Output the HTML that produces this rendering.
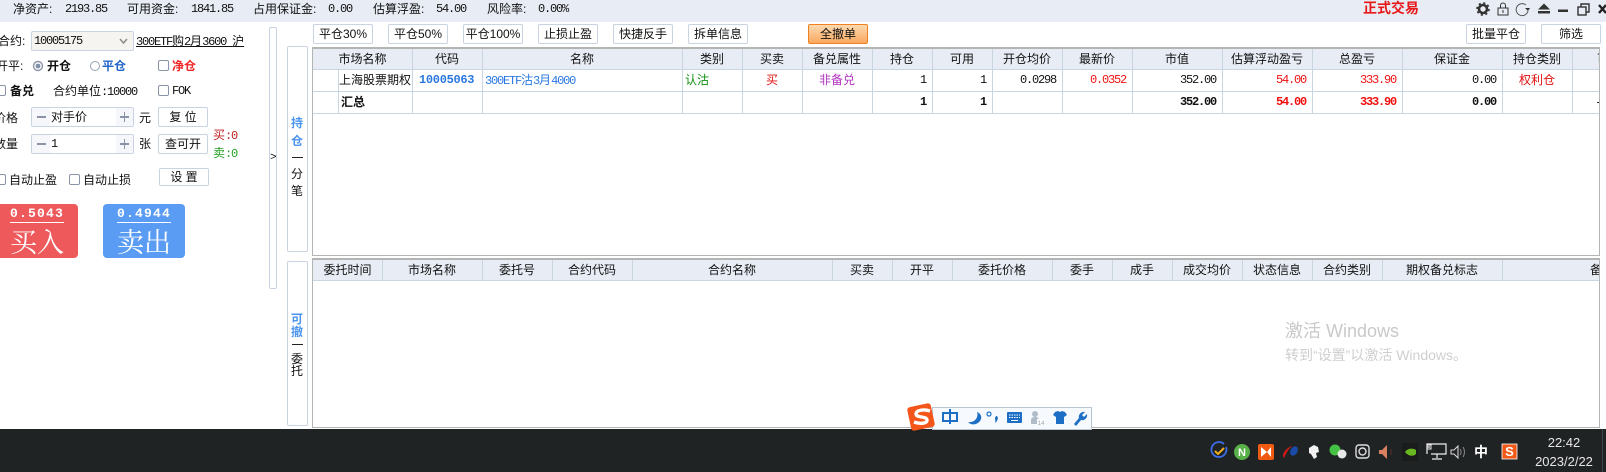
<!DOCTYPE html>
<html lang="zh-CN"><head><meta charset="utf-8"><title>正式交易</title>
<style>
*{box-sizing:border-box;margin:0;padding:0}
html,body{width:1606px;height:472px;overflow:hidden;background:#fff}
body{position:relative;font:12px/14px "Liberation Sans","WenQuanYi Zen Hei","Noto Sans CJK SC",sans-serif;color:#111}
.a{position:absolute;white-space:nowrap}
.m{font-family:"Liberation Mono","WenQuanYi Zen Hei",monospace;font-size:12px;letter-spacing:-1.2px}
.bx{position:absolute;background:#fff;border:1px solid #c9d3e1;border-radius:2px}
.btn{position:absolute;height:20px;background:#fff;border:1px solid #c9d3e1;border-radius:2px;text-align:center;line-height:18px;white-space:nowrap}
.cb{position:absolute;width:11px;height:11px;border:1px solid #8a94a6;border-radius:2px;background:#fff}
.h{position:absolute;text-align:center;white-space:nowrap;line-height:14px}
.v{position:absolute;background:#c9d6e2;width:1px}
.r{position:absolute;background:#c9d6e2;height:1px}
.cell{position:absolute;height:14px;line-height:14px;white-space:nowrap}
.num{text-align:right;font-family:"Liberation Mono",monospace;font-size:12px;letter-spacing:-1.2px}
.b{font-weight:bold}
svg{position:absolute;overflow:visible}
</style></head><body>

<!-- top bar -->
<div class="a" style="left:0;top:0;width:1606px;height:22px;background:#e8edf5"></div>
<div class="a" style="left:13px;top:2px">净资产:</div><div class="a m" style="left:65px;top:2px">2193.85</div>
<div class="a" style="left:127px;top:2px">可用资金:</div><div class="a m" style="left:191px;top:2px">1841.85</div>
<div class="a" style="left:253px;top:2px">占用保证金:</div><div class="a m" style="left:328px;top:2px">0.00</div>
<div class="a" style="left:373px;top:2px">估算浮盈:</div><div class="a m" style="left:436px;top:2px">54.00</div>
<div class="a" style="left:487px;top:2px">风险率:</div><div class="a m" style="left:538px;top:2px">0.00%</div>
<div class="a b" style="left:1363px;top:0;font-size:14px;line-height:16px;color:#e81818">正式交易</div>

<!-- window icons -->
<svg style="left:0;top:0" width="1606" height="22" viewBox="0 0 1606 22">
<circle cx="1483" cy="9" r="4" fill="none" stroke="#333" stroke-width="2.6"/>
<circle cx="1483" cy="9" r="6" fill="none" stroke="#333" stroke-width="1.6" stroke-dasharray="2.2 2.5"/>
<rect x="1498" y="8" width="10" height="7" fill="none" stroke="#333"/><path d="M1500.5 8V5.5a2.5 2.5 0 0 1 5 0V8" fill="none" stroke="#333"/><path d="M1503 10v3" stroke="#333"/>
<path d="M1526 5a6 6 0 1 0 2 6" fill="none" stroke="#555"/><path d="M1525 8h5l-2 3z" fill="#333"/>
<path d="M1544 3.5l6 6h-12z" fill="#333"/><rect x="1538" y="11" width="12" height="2.5" fill="#333"/>
<rect x="1558" y="9.5" width="10" height="2.5" fill="#333"/>
<rect x="1578" y="7" width="8" height="8" fill="#e8edf5" stroke="#333" stroke-width="1.4"/><path d="M1581 6.5V4h8v8h-2.5" fill="none" stroke="#333" stroke-width="1.4"/>
<path d="M1599 5l7 8M1606 5l-7 8" stroke="#222" stroke-width="2.4"/>
</svg>

<!-- left panel -->
<div class="a" style="left:-2px;top:34px;font-size:12px">合约:</div>
<div class="bx" style="left:31px;top:31px;width:103px;height:20px;background:#f6f4f0"></div>
<div class="a m" style="left:34px;top:34px">10005175</div>
<svg style="left:119px;top:38px" width="9" height="6"><path d="M1 1l3.5 4L8 1" fill="none" stroke="#888" stroke-width="1.4"/></svg>
<div class="a" style="left:136px;top:34px;text-decoration:underline;font-size:12px"><span class="m">300ETF</span>购<span class="m">2</span>月<span class="m">3600 </span>沪</div>

<div class="a" style="left:-4px;top:59px">开平:</div>
<svg style="left:32px;top:60px" width="12" height="12"><circle cx="6" cy="6" r="4.5" fill="#fff" stroke="#8a94a6" stroke-width="1.4"/><circle cx="6" cy="6" r="2.4" fill="#8090a8"/></svg>
<div class="a b" style="left:47px;top:59px">开仓</div>
<svg style="left:89px;top:60px" width="12" height="12"><circle cx="6" cy="6" r="4.5" fill="#fff" stroke="#98a2b4"/></svg>
<div class="a b" style="left:102px;top:59px;color:#2266c8">平仓</div>
<div class="cb" style="left:158px;top:60px"></div>
<div class="a b" style="left:172px;top:59px;color:#f02828">净仓</div>

<div class="cb" style="left:-5px;top:85px"></div>
<div class="a b" style="left:10px;top:84px">备兑</div>
<div class="a" style="left:53px;top:84px">合约单位<span class="m">:10000</span></div>
<div class="cb" style="left:158px;top:85px"></div>
<div class="a m" style="left:172px;top:84px">FOK</div>

<div class="a" style="left:-6px;top:111px">价格</div>
<div class="bx" style="left:31px;top:107px;width:103px;height:20px"></div>
<div class="a" style="left:32px;top:108px;width:18px;height:18px;background:#f5f7fb"></div>
<div class="a" style="left:116px;top:108px;width:17px;height:18px;background:#f5f7fb"></div>
<div class="a" style="left:37px;top:116px;width:9px;height:2px;background:#8a94a6"></div>
<div class="a" style="left:120px;top:116px;width:9px;height:2px;background:#8a94a6"></div>
<div class="a" style="left:124px;top:112px;width:1px;height:10px;background:#8a94a6"></div>
<div class="a" style="left:51px;top:110px">对手价</div>
<div class="a" style="left:139px;top:111px">元</div>
<div class="btn" style="left:158px;top:107px;width:50px">复 位</div>

<div class="a" style="left:-6px;top:137px">数量</div>
<div class="bx" style="left:31px;top:134px;width:103px;height:20px"></div>
<div class="a" style="left:32px;top:135px;width:18px;height:18px;background:#f5f7fb"></div>
<div class="a" style="left:116px;top:135px;width:17px;height:18px;background:#f5f7fb"></div>
<div class="a" style="left:37px;top:143px;width:9px;height:2px;background:#8a94a6"></div>
<div class="a" style="left:120px;top:143px;width:9px;height:2px;background:#8a94a6"></div>
<div class="a" style="left:124px;top:139px;width:1px;height:10px;background:#8a94a6"></div>
<div class="a m" style="left:51px;top:137px">1</div>
<div class="a" style="left:139px;top:137px">张</div>
<div class="btn" style="left:158px;top:134px;width:50px">查可开</div>
<div class="a" style="left:213px;top:128px;color:#c02020">买<span class="m">:0</span></div>
<div class="a" style="left:213px;top:146px;color:#20a020">卖<span class="m">:0</span></div>

<div class="cb" style="left:-5px;top:174px"></div>
<div class="a" style="left:9px;top:173px">自动止盈</div>
<div class="cb" style="left:69px;top:174px"></div>
<div class="a" style="left:83px;top:173px">自动止损</div>
<div class="btn" style="left:159px;top:168px;width:50px;height:18px;line-height:16px">设 置</div>

<div class="a" style="left:-6px;top:204px;width:84px;height:54px;background:#ee5a5c;border-radius:4px"></div>
<div class="a" style="left:10px;top:206px;width:54px;text-align:center;color:#fff;font:bold 13px/15px 'Liberation Mono',monospace;letter-spacing:1.2px">0.5043</div>
<div class="a" style="left:10px;top:222px;width:54px;height:1px;background:#fff"></div>
<div class="a" style="left:10px;top:226px;color:#fff;font:27px/30px 'Noto Serif CJK SC',serif">买入</div>
<div class="a" style="left:103px;top:204px;width:82px;height:54px;background:#5a9cf3;border-radius:4px"></div>
<div class="a" style="left:117px;top:206px;width:54px;text-align:center;color:#fff;font:bold 13px/15px 'Liberation Mono',monospace;letter-spacing:1.2px">0.4944</div>
<div class="a" style="left:117px;top:222px;width:54px;height:1px;background:#fff"></div>
<div class="a" style="left:117px;top:226px;color:#fff;font:27px/30px 'Noto Serif CJK SC',serif">卖出</div>

<!-- splitter and tabs -->
<div class="bx" style="left:269px;top:27px;width:8px;height:262px"></div>
<div class="a" style="left:270px;top:151px;font:11px/14px 'Liberation Mono',monospace">&gt;</div>
<div class="bx" style="left:287px;top:46px;width:21px;height:206px"></div>
<div class="a" style="left:291px;top:116px;color:#4a94f0;font-weight:bold">持</div>
<div class="a" style="left:291px;top:134px;color:#4a94f0;font-weight:bold">仓</div>
<div class="a" style="left:292px;top:157px;width:11px;height:1px;background:#222"></div>
<div class="a" style="left:291px;top:167px">分</div>
<div class="a" style="left:291px;top:184px">笔</div>
<div class="bx" style="left:287px;top:261px;width:21px;height:165px"></div>
<div class="a" style="left:291px;top:312px;color:#4a94f0;font-weight:bold">可</div>
<div class="a" style="left:291px;top:325px;color:#4a94f0;font-weight:bold">撤</div>
<div class="a" style="left:292px;top:344px;width:11px;height:1px;background:#222"></div>
<div class="a" style="left:291px;top:352px">委</div>
<div class="a" style="left:291px;top:364px">托</div>

<!-- toolbar -->
<div class="btn" style="left:313px;top:24px;width:60px">平仓30%</div>
<div class="btn" style="left:388px;top:24px;width:60px">平仓50%</div>
<div class="btn" style="left:463px;top:24px;width:60px">平仓100%</div>
<div class="btn" style="left:538px;top:24px;width:60px">止损止盈</div>
<div class="btn" style="left:613px;top:24px;width:60px">快捷反手</div>
<div class="btn" style="left:688px;top:24px;width:60px">拆单信息</div>
<div class="btn" style="left:808px;top:24px;width:60px;border-color:#f08020;background:linear-gradient(#fdd9b0,#f9a860)">全撤单</div>
<div class="btn" style="left:1466px;top:24px;width:60px">批量平仓</div>
<div class="btn" style="left:1541px;top:24px;width:60px">筛选</div>

<!-- upper table -->
<div class="a" style="left:312px;top:47px;width:1288px;height:209px;border:1px solid #b4b4b4;border-width:2px 1px 1px 1px;overflow:hidden;background:#fff"></div>
<div class="a" style="left:313px;top:49px;width:1286px;height:20px;background:#e8edf5"></div>
<div class="r" style="left:313px;top:69px;width:1286px"></div>
<div class="r" style="left:313px;top:91px;width:1286px"></div>
<div class="r" style="left:313px;top:113px;width:1286px"></div>
<div class="v" style="left:338px;top:70px;height:43px"></div>
<div class="v" style="left:412px;top:49px;height:64px"></div><div class="v" style="left:482px;top:49px;height:64px"></div><div class="v" style="left:682px;top:49px;height:64px"></div><div class="v" style="left:742px;top:49px;height:64px"></div><div class="v" style="left:802px;top:49px;height:64px"></div><div class="v" style="left:872px;top:49px;height:64px"></div><div class="v" style="left:932px;top:49px;height:64px"></div><div class="v" style="left:992px;top:49px;height:64px"></div><div class="v" style="left:1062px;top:49px;height:64px"></div><div class="v" style="left:1132px;top:49px;height:64px"></div><div class="v" style="left:1222px;top:49px;height:64px"></div><div class="v" style="left:1312px;top:49px;height:64px"></div><div class="v" style="left:1402px;top:49px;height:64px"></div><div class="v" style="left:1502px;top:49px;height:64px"></div><div class="v" style="left:1572px;top:49px;height:64px"></div>

<div class="h" style="left:313px;top:52px;width:99px">市场名称</div>
<div class="h" style="left:412px;top:52px;width:70px">代码</div>
<div class="h" style="left:482px;top:52px;width:200px">名称</div>
<div class="h" style="left:682px;top:52px;width:60px">类别</div>
<div class="h" style="left:742px;top:52px;width:60px">买卖</div>
<div class="h" style="left:802px;top:52px;width:70px">备兑属性</div>
<div class="h" style="left:872px;top:52px;width:60px">持仓</div>
<div class="h" style="left:932px;top:52px;width:60px">可用</div>
<div class="h" style="left:992px;top:52px;width:70px">开仓均价</div>
<div class="h" style="left:1062px;top:52px;width:70px">最新价</div>
<div class="h" style="left:1132px;top:52px;width:90px">市值</div>
<div class="h" style="left:1222px;top:52px;width:90px">估算浮动盈亏</div>
<div class="h" style="left:1312px;top:52px;width:90px">总盈亏</div>
<div class="h" style="left:1402px;top:52px;width:100px">保证金</div>
<div class="h" style="left:1502px;top:52px;width:70px">持仓类别</div>
<div class="a" style="left:1597px;top:52px;width:2px;overflow:hidden">可</div>

<div class="cell" style="left:339px;top:73px">上海股票期权</div>
<div class="cell b" style="left:419px;top:73px;color:#2a78e0;font-family:'Liberation Mono',monospace;font-size:12px;letter-spacing:-.3px">10005063</div>
<div class="cell" style="left:485px;top:73px;color:#2a78e0"><span class="m">300ETF</span>沽<span class="m">3</span>月<span class="m">4000</span></div>
<div class="cell" style="left:685px;top:73px;color:#109010">认沽</div>
<div class="h" style="left:742px;top:73px;width:60px;color:#e01010">买</div>
<div class="h" style="left:802px;top:73px;width:70px;color:#b030c0">非备兑</div>
<div class="cell num" style="left:872px;top:73px;width:54px">1</div>
<div class="cell num" style="left:932px;top:73px;width:54px">1</div>
<div class="cell num" style="left:992px;top:73px;width:64px">0.0298</div>
<div class="cell num" style="left:1062px;top:73px;width:64px;color:#f01010">0.0352</div>
<div class="cell num" style="left:1132px;top:73px;width:84px">352.00</div>
<div class="cell num" style="left:1222px;top:73px;width:84px;color:#f01010">54.00</div>
<div class="cell num" style="left:1312px;top:73px;width:84px;color:#f01010">333.90</div>
<div class="cell num" style="left:1402px;top:73px;width:94px">0.00</div>
<div class="h" style="left:1502px;top:73px;width:70px;color:#e01010">权利仓</div>

<div class="cell b" style="left:341px;top:95px">汇总</div>
<div class="cell num b" style="left:872px;top:95px;width:54px">1</div>
<div class="cell num b" style="left:932px;top:95px;width:54px">1</div>
<div class="cell num b" style="left:1132px;top:95px;width:84px">352.00</div>
<div class="cell num b" style="left:1222px;top:95px;width:84px;color:#f01010">54.00</div>
<div class="cell num b" style="left:1312px;top:95px;width:84px;color:#f01010">333.90</div>
<div class="cell num b" style="left:1402px;top:95px;width:94px">0.00</div>
<div class="a" style="left:1597px;top:102px;width:2px;height:1px;background:#222"></div>

<!-- lower table -->
<div class="a" style="left:312px;top:258px;width:1288px;height:170px;border:1px solid #b4b4b4;border-width:2px 1px 1px 1px;background:#fff"></div>
<div class="a" style="left:313px;top:260px;width:1286px;height:20px;background:#e8edf5"></div>
<div class="r" style="left:313px;top:280px;width:1286px"></div>
<div class="v" style="left:382px;top:260px;height:20px"></div><div class="v" style="left:482px;top:260px;height:20px"></div><div class="v" style="left:552px;top:260px;height:20px"></div><div class="v" style="left:632px;top:260px;height:20px"></div><div class="v" style="left:832px;top:260px;height:20px"></div><div class="v" style="left:892px;top:260px;height:20px"></div><div class="v" style="left:952px;top:260px;height:20px"></div><div class="v" style="left:1052px;top:260px;height:20px"></div><div class="v" style="left:1112px;top:260px;height:20px"></div><div class="v" style="left:1172px;top:260px;height:20px"></div><div class="v" style="left:1242px;top:260px;height:20px"></div><div class="v" style="left:1312px;top:260px;height:20px"></div><div class="v" style="left:1382px;top:260px;height:20px"></div><div class="v" style="left:1502px;top:260px;height:20px"></div>
<div class="h" style="left:313px;top:263px;width:69px">委托时间</div>
<div class="h" style="left:382px;top:263px;width:100px">市场名称</div>
<div class="h" style="left:482px;top:263px;width:70px">委托号</div>
<div class="h" style="left:552px;top:263px;width:80px">合约代码</div>
<div class="h" style="left:632px;top:263px;width:200px">合约名称</div>
<div class="h" style="left:832px;top:263px;width:60px">买卖</div>
<div class="h" style="left:892px;top:263px;width:60px">开平</div>
<div class="h" style="left:952px;top:263px;width:100px">委托价格</div>
<div class="h" style="left:1052px;top:263px;width:60px">委手</div>
<div class="h" style="left:1112px;top:263px;width:60px">成手</div>
<div class="h" style="left:1172px;top:263px;width:70px">成交均价</div>
<div class="h" style="left:1242px;top:263px;width:70px">状态信息</div>
<div class="h" style="left:1312px;top:263px;width:70px">合约类别</div>
<div class="h" style="left:1382px;top:263px;width:120px">期权备兑标志</div>
<div class="a" style="left:1590px;top:263px;width:9px;overflow:hidden">备注</div>

<!-- watermark -->
<div class="a" style="left:1285px;top:319px;color:#c9c9c9;font:18px/24px 'Liberation Sans','Noto Sans CJK SC',sans-serif">激活 Windows</div>
<div class="a" style="left:1285px;top:346px;color:#cfcfcf;font:14px/18px 'Liberation Sans','Noto Sans CJK SC',sans-serif">转到“设置”以激活 Windows。</div>

<!-- taskbar -->
<div class="a" style="left:0;top:429px;width:1606px;height:43px;background:#202324"></div>
<div class="a" style="left:1602px;top:429px;width:1px;height:43px;background:#44484a"></div>
<div class="a" style="left:1530px;top:435px;width:68px;text-align:center;color:#e6e6e6;font-size:13px;line-height:15px">22:42</div>
<div class="a" style="left:1530px;top:454px;width:68px;text-align:center;color:#e6e6e6;font-size:13px;line-height:15px">2023/2/22</div>

<!-- tray icons -->
<svg style="left:0;top:429px" width="1606" height="43" viewBox="0 429 1606 43">
<path d="M1226 447a7.5 7.5 0 1 1-2-3" fill="none" stroke="#3b6ee8" stroke-width="1.8"/><path d="M1215 451l3 3 6-6" fill="none" stroke="#f0b020" stroke-width="2"/>
<circle cx="1242" cy="452" r="8" fill="#58b048"/><text x="1242" y="456" text-anchor="middle" font-size="11" font-weight="bold" fill="#fff" font-family="Liberation Sans">N</text>
<rect x="1258" y="444" width="16" height="16" rx="2" fill="#f05a10"/><path d="M1261 447l6 5-6 5zM1271 447l-4 5 4 5z" fill="#fff"/>
<path d="M1284 458c-3-3 2-11 9-12-5 2-7 8-9 12z" fill="#d81818"/><ellipse cx="1294" cy="451" rx="3.5" ry="5" fill="#1a4aa8" transform="rotate(30 1294 451)"/>
<path d="M1309 448l5-3 4 2 1 5-3 1 1 4-3 2-3-5-2-1z" fill="#f2f2f2"/>
<circle cx="1335" cy="450" r="5.5" fill="#44c044"/><circle cx="1342" cy="454" r="4.5" fill="#e8e8e8"/>
<rect x="1356" y="445" width="13" height="13" rx="3" fill="none" stroke="#ddd" stroke-width="1.4"/><circle cx="1362.500" cy="451.500" r="3.500" fill="none" stroke="#ddd" stroke-width="1.400"/>
<path d="M1379 450h3l5-5v14l-5-5h-3z" fill="#d88060"/><path d="M1391 449v6" stroke="#5a3030"/>
<rect x="1402" y="443" width="16" height="18" fill="#1a1c1c"/><path d="M1405 452c3-4 8-4 11-2v4c-3 3-8 2-11-2z" fill="#6ab820"/>
<path d="M1427 447h3M1427 454v-10h19v10h-15" fill="none" stroke="#eee" stroke-width="1.200"/><rect x="1427" y="445" width="4" height="4" fill="none" stroke="#eee"/><path d="M1437 454v4M1432 459h10" stroke="#eee" stroke-width="1.200"/>
<path d="M1451 450h3l4-4v12l-4-4h-3z" fill="none" stroke="#ddd"/><path d="M1460 449c1.500 2 1.500 4 0 6M1463 447c2 3 2 7 0 10" fill="none" stroke="#888"/>
<text x="1481" y="457" text-anchor="middle" font-size="14" font-weight="bold" fill="#fff" font-family="Noto Sans CJK SC">中</text>
<rect x="1502" y="444" width="15" height="15" fill="#f05a18" stroke="#fff" stroke-width="0.800"/><text x="1509.500" y="456" text-anchor="middle" font-size="13" font-weight="bold" fill="#fff" font-family="Liberation Sans">S</text>
</svg>

<!-- sogou bar -->
<div class="a" style="left:932px;top:407px;width:160px;height:23px;background:#f6f9fd;border:1px solid #b9c5d2"></div>
<svg style="left:900px;top:400px" width="200" height="32" viewBox="900 400 200 32">
<rect x="909" y="405" width="24" height="24" rx="3" fill="#f3551a" transform="rotate(-12 921 417)"/>
<path d="M930 411c-6-2-14-1-14 3s11 2 11 6-8 4-13 2" fill="none" stroke="#fff" stroke-width="3.400"/>
<rect x="943" y="413" width="14" height="8" fill="none" stroke="#1c6fc4" stroke-width="2"/><path d="M950 409v15" stroke="#1c6fc4" stroke-width="2"/>
<path d="M977 412c2 6-3 11-9 10 3 4 11 3 13-3 1-3-1-6-4-7z" fill="#1c6fc4"/>
<circle cx="989" cy="414" r="2" fill="none" stroke="#1c6fc4" stroke-width="1.200"/><path d="M997 416c2 2 0 6-2 7 1-2 0-3 0-5 0-1 1-2 2-2z" fill="#1c6fc4"/>
<rect x="1007" y="412" width="15" height="11" rx="1" fill="#1c6fc4"/><path d="M1009 415h11M1009 417.500h11" stroke="#fff" stroke-dasharray="1.500 1"/><path d="M1011 420.500h7" stroke="#fff"/>
<circle cx="1035" cy="414" r="3" fill="#b0bcc8"/><path d="M1031 424v-4c0-2 2-3 4-3s4 1 4 3v4z" fill="#b0bcc8"/><rect x="1037" y="419" width="8" height="6" fill="#fff"/><text x="1041" y="425" font-size="6.500" text-anchor="middle" fill="#9aa8b4" font-family="Liberation Sans">14</text>
<path d="M1055 412l3-1 2 1 2-1 3 1 2 3-3 2v7h-8v-7l-3-2z" fill="#1c6fc4"/>
<path d="M1074 424l5-6c-1-3 2-7 6-6l-3 3 2 2 3-3c1 4-3 7-6 6l-5 6z" fill="#1c6fc4"/>
</svg>
</body></html>
